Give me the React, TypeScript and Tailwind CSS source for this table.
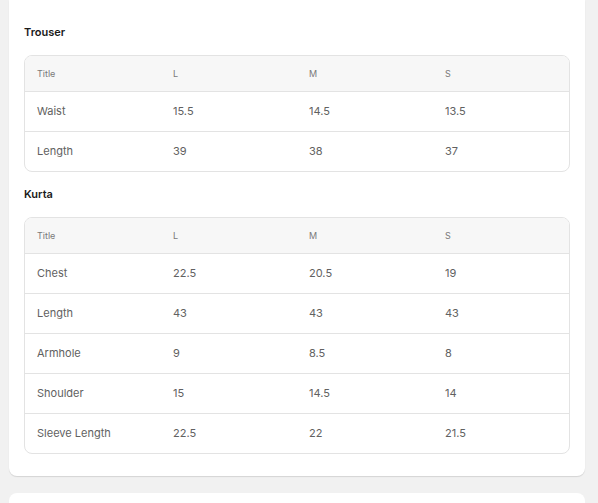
import React from 'react';

interface SizeTable {
  name: string;
  rows: { title: string; values: string[] }[];
}

const sizes = ['L', 'M', 'S'];

const tables: SizeTable[] = [
  {
    name: 'Trouser',
    rows: [
      { title: 'Waist', values: ['15.5', '14.5', '13.5'] },
      { title: 'Length', values: ['39', '38', '37'] },
    ],
  },
  {
    name: 'Kurta',
    rows: [
      { title: 'Chest', values: ['22.5', '20.5', '19'] },
      { title: 'Length', values: ['43', '43', '43'] },
      { title: 'Armhole', values: ['9', '8.5', '8'] },
      { title: 'Shoulder', values: ['15', '14.5', '14'] },
      { title: 'Sleeve Length', values: ['22.5', '22', '21.5'] },
    ],
  },
];

function ChartTable({ table }: { table: SizeTable }) {
  return (
    <div>
      <h3 className="text-[11px] leading-4 font-semibold text-[#1a1a1a]">{table.name}</h3>
      <div className="mt-[15px] border border-[#e3e3e3] rounded-lg overflow-hidden">
        <div className="grid grid-cols-4 h-[36px] items-center bg-[#f7f7f7] border-b border-[#e3e3e3] text-[9px] text-[#7a7a7a]">
          <div className="pl-3">Title</div>
          {sizes.map(s => (
            <div key={s} className="pl-3">{s}</div>
          ))}
        </div>
        {table.rows.map((row, i) => {
          const isLast = i === table.rows.length - 1;
          return (
            <div
              key={row.title + i}
              className={`grid grid-cols-4 items-center text-[11px] text-[#616161] ${
                isLast ? 'h-[39px]' : 'h-[40px] border-b border-[#e3e3e3]'
              }`}
            >
              <div className="pl-3">{row.title}</div>
              {row.values.map((v, j) => (
                <div key={j} className="pl-3">{v}</div>
              ))}
            </div>
          );
        })}
      </div>
    </div>
  );
}

export default function App() {
  return (
    <div className="min-h-[503px] bg-[#f1f1f1] overflow-hidden" style={{ fontFamily: 'Inter, "Noto Sans", sans-serif' }}>
      <div className="ml-[9px] w-[576px] bg-white rounded-b-lg shadow-[0_1px_1px_rgba(0,0,0,0.12)] px-[15px] pt-6 pb-[22px] flex flex-col gap-[14px]">
        {tables.map(t => (
          <ChartTable key={t.name} table={t} />
        ))}
      </div>
      <div className="ml-[9px] mt-[17px] w-[576px] h-[40px] bg-white rounded-t-lg"></div>
    </div>
  );
}
